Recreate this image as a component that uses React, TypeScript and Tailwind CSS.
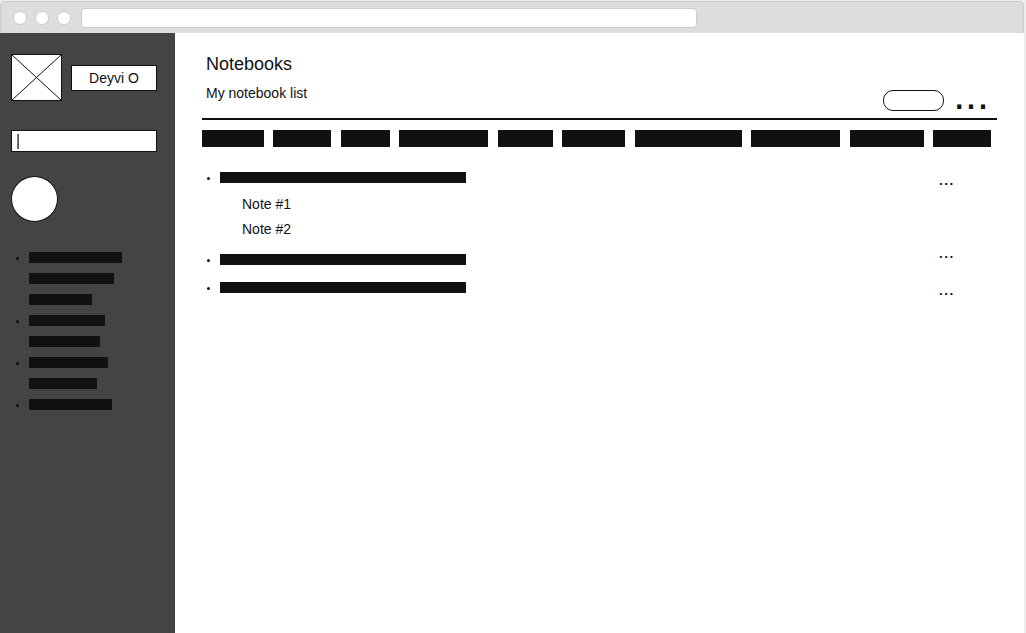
const menu = [
  { label: "First section", lines: ["w-[93px]", "w-[85px]", "w-[63px]"] },
  { label: "Second section", lines: ["w-[76px]", "w-[71px]"] },
  { label: "Third section", lines: ["w-[79px]", "w-[68px]"] },
  { label: "Fourth section", lines: ["w-[83px]"] },
];

const tabs = [
  "w-[62px]",
  "w-[58px]",
  "w-[49px]",
  "w-[89px]",
  "w-[55px]",
  "w-[63px]",
  "w-[107px]",
  "w-[89px]",
  "w-[74px]",
  "w-[58px]",
];

const notebooks = [
  { name: "Notebook 1", space: "mb-3", notes: ["Note #1", "Note #2"] },
  { name: "Notebook 2", space: "mb-[17px]", notes: [] },
  { name: "Notebook 3", space: "", notes: [] },
];

function Bullet() {
  return <span className="mt-[5px] size-[3px] shrink-0 rounded-full bg-[#111]" />;
}

function TitleBar() {
  return (
    <header className="flex h-8 items-center rounded-t-[5px] border border-b-0 border-[#ccc] bg-[#ddd] pl-3">
      <div className="mr-[10px] flex gap-2">
        <span className="size-[14px] rounded-full border border-[#ccc] bg-white" />
        <span className="size-[14px] rounded-full border border-[#ccc] bg-white" />
        <span className="size-[14px] rounded-full border border-[#ccc] bg-white" />
      </div>
      <input
        type="text"
        aria-label="Address"
        className="h-5 w-[61%] rounded-[4px] border border-[#ccc] bg-white px-2 text-xs outline-none"
      />
    </header>
  );
}

function Sidebar() {
  return (
    <aside className="flex w-[175px] shrink-0 flex-col bg-[#444] pt-[21px] pr-[18px] pl-[11px]">
      <div className="flex items-center justify-between">
        <svg
          className="h-[47px] w-[51px]"
          viewBox="0 0 51 47"
          fill="#fff"
          stroke="#111"
          role="img"
          aria-label="Profile picture"
        >
          <rect x="0.5" y="0.5" width="50" height="46" />
          <path d="M0.5 0.5L50.5 46.5M50.5 0.5L0.5 46.5" />
        </svg>
        <button
          type="button"
          className="h-[26px] w-[86px] border border-[#111] bg-white text-sm"
        >
          Deyvi O
        </button>
      </div>
      <input
        type="text"
        aria-label="Search"
        defaultValue="|"
        className="mt-[29px] h-[22px] w-full border border-[#111] bg-white px-1 text-base leading-5 outline-none will-change-transform"
      />
      <button
        type="button"
        aria-label="Add"
        className="mt-6 h-[46px] w-[47px] rounded-[50%] border border-[#111] bg-white"
      />
      <nav className="mt-[30px] pl-[5px]">
        <ul className="flex flex-col gap-[10px]">
          {menu.map((item) => (
            <li key={item.label} className="flex gap-[10px]">
              <Bullet />
              <a href="#" aria-label={item.label} className="flex flex-col gap-[10px]">
                {item.lines.map((width) => (
                  <span key={width} className={`block h-[11px] bg-[#111] ${width}`} />
                ))}
              </a>
            </li>
          ))}
        </ul>
      </nav>
    </aside>
  );
}

export default function App() {
  return (
    <div className="flex min-h-screen flex-col bg-[#ededed] pt-px pr-[2px] font-['Liberation_Sans',Arial,sans-serif] text-[#111] antialiased">
      <TitleBar />
      <div className="flex grow bg-white">
        <Sidebar />
        <main className="min-w-0 grow px-[27px] pt-[17px]">
          <div className="flex items-end justify-between border-b-2 border-[#111]">
            <div className="pb-[15px] pl-1">
              <h1 className="text-lg leading-7">Notebooks</h1>
              <p className="mt-[5px] text-sm leading-5">My notebook list</p>
            </div>
            <div className="flex items-end gap-[9px] pr-2 pb-[7px]">
              <button
                type="button"
                aria-label="New notebook"
                className="h-[21px] w-[61px] rounded-[10px] border border-[#111] bg-white"
              />
              <button
                type="button"
                aria-label="More options"
                className="h-[34px] text-[43px] leading-[34px]"
              >
                ...
              </button>
            </div>
          </div>

          <nav className="mt-[10px] flex justify-between pr-[6px]">
            {tabs.map((width, i) => (
              <a
                key={i}
                href="#"
                aria-label={`Category ${i + 1}`}
                className={`h-[17px] bg-[#111] ${width}`}
              />
            ))}
          </nav>

          <section className="mt-[22px] flex justify-between pr-[43px] pl-[5px]">
            <ul className="pt-[3px]">
              {notebooks.map((notebook) => (
                <li key={notebook.name} className={`flex gap-[10px] ${notebook.space}`}>
                  <Bullet />
                  <div>
                    <a
                      href="#"
                      aria-label={notebook.name}
                      className="block h-[11px] w-[246px] bg-[#111]"
                    />
                    {notebook.notes.length > 0 && (
                      <ul className="mt-[9px] pl-[22px] text-sm leading-[25px]">
                        {notebook.notes.map((note) => (
                          <li key={note}>{note}</li>
                        ))}
                      </ul>
                    )}
                  </div>
                </li>
              ))}
            </ul>
            <div className="flex flex-col text-[19px] leading-5">
              <button type="button" aria-label="Notebook 1 options" className="mb-[53px] h-5">
                ...
              </button>
              <button type="button" aria-label="Notebook 2 options" className="mb-[17px] h-5">
                ...
              </button>
              <button type="button" aria-label="Notebook 3 options" className="h-5">
                ...
              </button>
            </div>
          </section>
        </main>
      </div>
    </div>
  );
}
